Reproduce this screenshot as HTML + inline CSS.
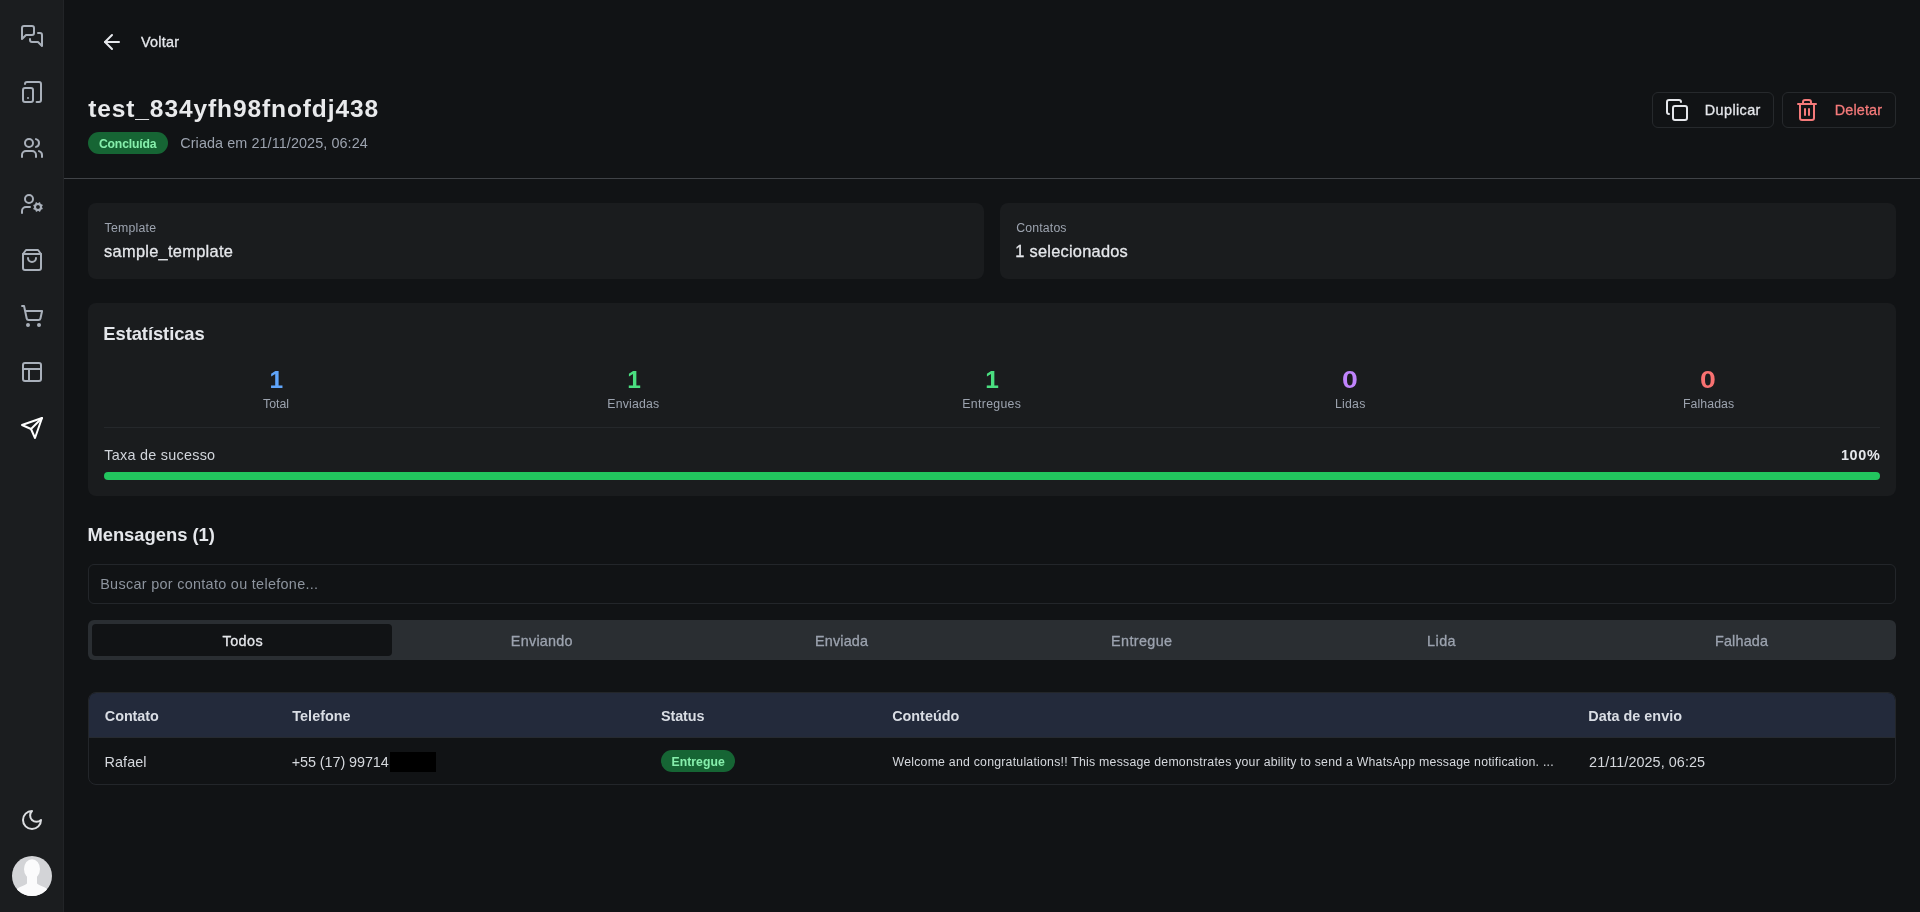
<!DOCTYPE html>
<html lang="pt-BR">
<head>
<meta charset="utf-8">
<title>Campanha</title>
<style>
*{box-sizing:border-box;margin:0;padding:0}
html,body{width:1920px;height:912px;overflow:hidden;background:#111315;color:#e5e7eb;font-family:"Liberation Sans",sans-serif;}
body{position:relative;will-change:transform}
.abs{position:absolute}
.side{position:absolute;left:0;top:0;width:64px;height:912px;background:#1b1d1f;border-right:1px solid #222427}
.side svg{position:absolute;left:20px;width:24px;height:24px;fill:none;stroke:#a9b0ba;stroke-width:2;stroke-linecap:round;stroke-linejoin:round}
.t{position:absolute;white-space:nowrap;line-height:1}
.med{-webkit-text-stroke:0.3px currentColor}
.card{position:absolute;background:#1a1c1e;border-radius:8px}
</style>
</head>
<body>
<div class="side">
<svg style="top:24px" viewBox="0 0 24 24"><path d="M14 9a2 2 0 0 1-2 2H6l-4 4V4a2 2 0 0 1 2-2h8a2 2 0 0 1 2 2z"/><path d="M18 9h2a2 2 0 0 1 2 2v11l-4-4h-6a2 2 0 0 1-2-2v-1"/></svg>
<svg style="top:80px" viewBox="0 0 24 24"><rect width="10" height="14" x="3" y="8" rx="2"/><path d="M5 4a2 2 0 0 1 2-2h12a2 2 0 0 1 2 2v16a2 2 0 0 1-2 2h-2.4"/><path d="M8 18h.01"/></svg>
<svg style="top:136px" viewBox="0 0 24 24"><path d="M16 21v-2a4 4 0 0 0-4-4H6a4 4 0 0 0-4 4v2"/><circle cx="9" cy="7" r="4"/><path d="M22 21v-2a4 4 0 0 0-3-3.87"/><path d="M16 3.13a4 4 0 0 1 0 7.75"/></svg>
<svg style="top:192px" viewBox="0 0 24 24"><circle cx="18" cy="15" r="3"/><circle cx="9" cy="7" r="4"/><path d="M10 15H6a4 4 0 0 0-4 4v2"/><path d="m21.700 16.400-.9-.3"/><path d="m15.200 13.900-.9-.3"/><path d="m16.600 18.700.3-.9"/><path d="m19.100 12.200.3-.9"/><path d="m19.600 18.700-.4-1"/><path d="m16.800 12.300-.4-1"/><path d="m14.300 16.600 1-.4"/><path d="m20.700 13.800 1-.4"/></svg>
<svg style="top:248px" viewBox="0 0 24 24"><path d="M6 2 3 6v14a2 2 0 0 0 2 2h14a2 2 0 0 0 2-2V6l-3-4Z"/><path d="M3 6h18"/><path d="M16 10a4 4 0 0 1-8 0"/></svg>
<svg style="top:304px" viewBox="0 0 24 24"><circle cx="8" cy="21" r="1"/><circle cx="19" cy="21" r="1"/><path d="M2.05 2.05h2l2.66 12.42a2 2 0 0 0 2 1.58h9.78a2 2 0 0 0 1.95-1.57l1.65-7.43H5.12"/></svg>
<svg style="top:360px" viewBox="0 0 24 24"><rect width="18" height="18" x="3" y="3" rx="2"/><path d="M3 9h18"/><path d="M9 21V9"/></svg>
<svg style="top:416px;stroke:#ffffff" viewBox="0 0 24 24"><path d="m22 2-7 20-4-9-9-4Z"/><path d="M22 2 11 13"/></svg>
<svg style="top:808px;stroke:#dcdee1" viewBox="0 0 24 24"><path d="M12 3a6 6 0 0 0 9 9 9 9 0 1 1-9-9Z"/></svg>
<svg style="top:856px;left:12px;width:40px;height:40px;stroke:none" viewBox="0 0 40 40"><defs><clipPath id="av"><circle cx="20" cy="20" r="20"/></clipPath></defs><circle cx="20" cy="20" r="20" fill="#d3d4d7"/><g clip-path="url(#av)" fill="#fbfbfc"><ellipse cx="20" cy="13" rx="8" ry="9.8"/><path d="M15 20h10v7.500c2 2.500 9 3 12 7.500v6H3v-6c3-4.500 10-5 12-7.500z"/></g></svg>
</div>

<!-- header -->
<svg class="abs" style="left:100px;top:30px;width:24px;height:24px;fill:none;stroke:#e5e7eb;stroke-width:2;stroke-linecap:round;stroke-linejoin:round" viewBox="0 0 24 24"><path d="m12 19-7-7 7-7"/><path d="M19 12H5"/></svg>
<div class="abs" style="left:88px;top:132px;width:80px;height:22px;border-radius:11px;background:#166534"></div>
<div class="abs" style="left:64px;top:178px;width:1856px;height:1px;background:#404347"></div>

<!-- buttons -->
<div class="abs" style="left:1652px;top:92px;width:122px;height:36px;border:1px solid #26292c;border-radius:6px"></div>
<svg class="abs" style="left:1665px;top:98px;width:24px;height:24px;fill:none;stroke:#e5e7eb;stroke-width:2;stroke-linecap:round;stroke-linejoin:round" viewBox="0 0 24 24"><rect width="14" height="14" x="8" y="8" rx="2"/><path d="M4 16c-1.100 0-2-.9-2-2V4c0-1.100.9-2 2-2h10c1.100 0 2 .9 2 2"/></svg>
<div class="abs" style="left:1782px;top:92px;width:114px;height:36px;border:1px solid #26292c;border-radius:6px"></div>
<svg class="abs" style="left:1795px;top:98px;width:24px;height:24px;fill:none;stroke:#f47a7a;stroke-width:2;stroke-linecap:round;stroke-linejoin:round" viewBox="0 0 24 24"><path d="M3 6h18"/><path d="M19 6v14c0 1-1 2-2 2H7c-1 0-2-1-2-2V6"/><path d="M8 6V4c0-1 1-2 2-2h4c1 0 2 1 2 2v2"/><path d="M10 11v6"/><path d="M14 11v6"/></svg>

<!-- info cards -->
<div class="card" style="left:88px;top:203px;width:896px;height:76px"></div>
<div class="card" style="left:1000px;top:203px;width:896px;height:76px"></div>

<!-- stats -->
<div class="card" style="left:88px;top:303px;width:1808px;height:193px"></div>
<div class="abs" style="left:104px;top:427px;width:1776px;height:1px;background:#25282b"></div>
<div class="abs" style="left:104px;top:472px;width:1776px;height:8px;border-radius:4px;background:#22c55e"></div>

<!-- messages -->
<div class="abs" style="left:88px;top:564px;width:1808px;height:40px;border:1px solid #23262a;border-radius:6px"></div>

<div class="abs" style="left:88px;top:620px;width:1808px;height:40px;border-radius:6px;background:#2a2e32"></div>
<div class="abs" style="left:92px;top:624px;width:300px;height:32px;border-radius:4px;background:#111315"></div>

<!-- table -->
<div class="abs" style="left:88px;top:692px;width:1808px;height:93px;border:1px solid #23262a;border-radius:8px;overflow:hidden"><div style="height:44px;background:#232a3b"></div><div style="height:1px;background:#262a30"></div></div>
<div class="abs" style="left:390px;top:752px;width:46px;height:20px;background:#000"></div>
<div class="abs" style="left:661px;top:750px;width:74px;height:22px;border-radius:11px;background:#166534"></div>
<div class="t med" id="voltar" style="left:140.89px;top:35px;font-size:14.4px;color:#e5e7eb;letter-spacing:0.264px;">Voltar</div>
<div class="t" id="title" style="left:88.15px;top:97px;font-size:24.5px;color:#e9eaec;font-weight:bold;letter-spacing:0.905px;">test_834yfh98fnofdj438</div>
<div class="t" id="badge1" style="left:98.92px;top:138px;font-size:12.2px;color:#86efac;font-weight:bold;letter-spacing:-0.146px;">Concluída</div>
<div class="t" id="criada" style="left:180.27px;top:136px;font-size:14.4px;color:#9ca3af;letter-spacing:0.081px;">Criada em 21/11/2025, 06:24</div>
<div class="t med" id="dup" style="left:1704.77px;top:103px;font-size:14.4px;color:#e5e7eb;letter-spacing:0.408px;">Duplicar</div>
<div class="t med" id="del" style="left:1834.77px;top:103px;font-size:14.4px;color:#f57a7a;letter-spacing:0.138px;">Deletar</div>
<div class="t" id="l1" style="left:104.52px;top:222px;font-size:12.3px;color:#9ca3af;letter-spacing:0.223px;">Template</div>
<div class="t med" id="v1" style="left:104.07px;top:243px;font-size:16.4px;color:#e5e7eb;letter-spacing:0.286px;">sample_template</div>
<div class="t" id="l2" style="left:1016.35px;top:222px;font-size:12.3px;color:#9ca3af;letter-spacing:0.137px;">Contatos</div>
<div class="t med" id="v2" style="left:1015.34px;top:243px;font-size:16.4px;color:#e5e7eb;letter-spacing:0.239px;">1 selecionados</div>
<div class="t" id="est" style="left:103.37px;top:325px;font-size:18.4px;color:#e5e7eb;font-weight:bold;letter-spacing:-0.083px;">Estatísticas</div>
<div class="t" id="n1" style="left:269.48px;top:368px;font-size:24.5px;color:#60a5fa;font-weight:bold;">1</div>
<div class="t" id="n2" style="left:627.13px;top:368px;font-size:24.5px;color:#4ade80;font-weight:bold;">1</div>
<div class="t" id="n3" style="left:985.19px;top:368px;font-size:24.5px;color:#4ade80;font-weight:bold;">1</div>
<div class="t" id="n4" style="left:1342.8px;top:368px;font-size:24.5px;color:#c084fc;font-weight:bold;transform:scaleX(1.16);">0</div>
<div class="t" id="n5" style="left:1701.4px;top:368px;font-size:24.5px;color:#f87171;font-weight:bold;transform:scaleX(1.16);">0</div>
<div class="t" id="b1" style="left:263.12px;top:398px;font-size:12.3px;color:#9ca3af;letter-spacing:-0.003px;">Total</div>
<div class="t" id="b2" style="left:607.29px;top:398px;font-size:12.3px;color:#9ca3af;letter-spacing:0.189px;">Enviadas</div>
<div class="t" id="b3" style="left:962.29px;top:398px;font-size:12.3px;color:#9ca3af;letter-spacing:0.324px;">Entregues</div>
<div class="t" id="b4" style="left:1334.95px;top:398px;font-size:12.3px;color:#9ca3af;letter-spacing:0.248px;">Lidas</div>
<div class="t" id="b5" style="left:1682.95px;top:398px;font-size:12.3px;color:#9ca3af;letter-spacing:0.086px;">Falhadas</div>
<div class="t" id="taxa" style="left:104.35px;top:448px;font-size:14.4px;color:#d1d5db;letter-spacing:0.254px;">Taxa de sucesso</div>
<div class="t" id="pct" style="left:1840.89px;top:448px;font-size:14.4px;color:#e5e7eb;font-weight:bold;letter-spacing:0.702px;">100%</div>
<div class="t" id="msg" style="left:87.4px;top:526px;font-size:18.4px;color:#e5e7eb;font-weight:bold;letter-spacing:-0.022px;">Mensagens (1)</div>
<div class="t" id="ph" style="left:100.21px;top:577px;font-size:14.4px;color:#8d949e;letter-spacing:0.308px;">Buscar por contato ou telefone...</div>
<div class="t med" id="t1" style="left:222.54px;top:634px;font-size:14.4px;color:#e5e7eb;letter-spacing:0.439px;">Todos</div>
<div class="t med" id="t2" style="left:510.84px;top:634px;font-size:14.4px;color:#9ca3af;letter-spacing:0.255px;">Enviando</div>
<div class="t med" id="t3" style="left:814.98px;top:634px;font-size:14.4px;color:#9ca3af;letter-spacing:0.172px;">Enviada</div>
<div class="t med" id="t4" style="left:1111.11px;top:634px;font-size:14.4px;color:#9ca3af;letter-spacing:0.358px;">Entregue</div>
<div class="t med" id="t5" style="left:1427.11px;top:634px;font-size:14.4px;color:#9ca3af;letter-spacing:0.426px;">Lida</div>
<div class="t med" id="t6" style="left:1714.98px;top:634px;font-size:14.4px;color:#9ca3af;letter-spacing:0.172px;">Falhada</div>
<div class="t" id="h1" style="left:104.86px;top:709px;font-size:14.4px;color:#d9dde4;font-weight:bold;letter-spacing:-0.081px;">Contato</div>
<div class="t" id="h2" style="left:292.33px;top:709px;font-size:14.4px;color:#d9dde4;font-weight:bold;letter-spacing:0.025px;">Telefone</div>
<div class="t" id="h3" style="left:661.0px;top:709px;font-size:14.4px;color:#d9dde4;font-weight:bold;letter-spacing:-0.119px;">Status</div>
<div class="t" id="h4" style="left:892.15px;top:709px;font-size:14.4px;color:#d9dde4;font-weight:bold;">Conteúdo</div>
<div class="t" id="h5" style="left:1588.33px;top:709px;font-size:14.4px;color:#d9dde4;font-weight:bold;letter-spacing:0.004px;">Data de envio</div>
<div class="t" id="d1" style="left:104.54px;top:755px;font-size:14.4px;color:#d5d8dd;letter-spacing:0.088px;">Rafael</div>
<div class="t" id="d2" style="left:291.69px;top:755px;font-size:14.4px;color:#d5d8dd;letter-spacing:-0.07px;">+55 (17) 99714</div>
<div class="t" id="badge2" style="left:671.57px;top:756px;font-size:12.2px;color:#86efac;font-weight:bold;letter-spacing:0.046px;">Entregue</div>
<div class="t" id="d4" style="left:892.55px;top:756px;font-size:12.3px;color:#d5d8dd;letter-spacing:0.231px;">Welcome and congratulations!! This message demonstrates your ability to send a WhatsApp message notification. ...</div>
<div class="t" id="d5" style="left:1589.12px;top:755px;font-size:14.4px;color:#d5d8dd;letter-spacing:0.059px;">21/11/2025, 06:25</div>
</body>
</html>
